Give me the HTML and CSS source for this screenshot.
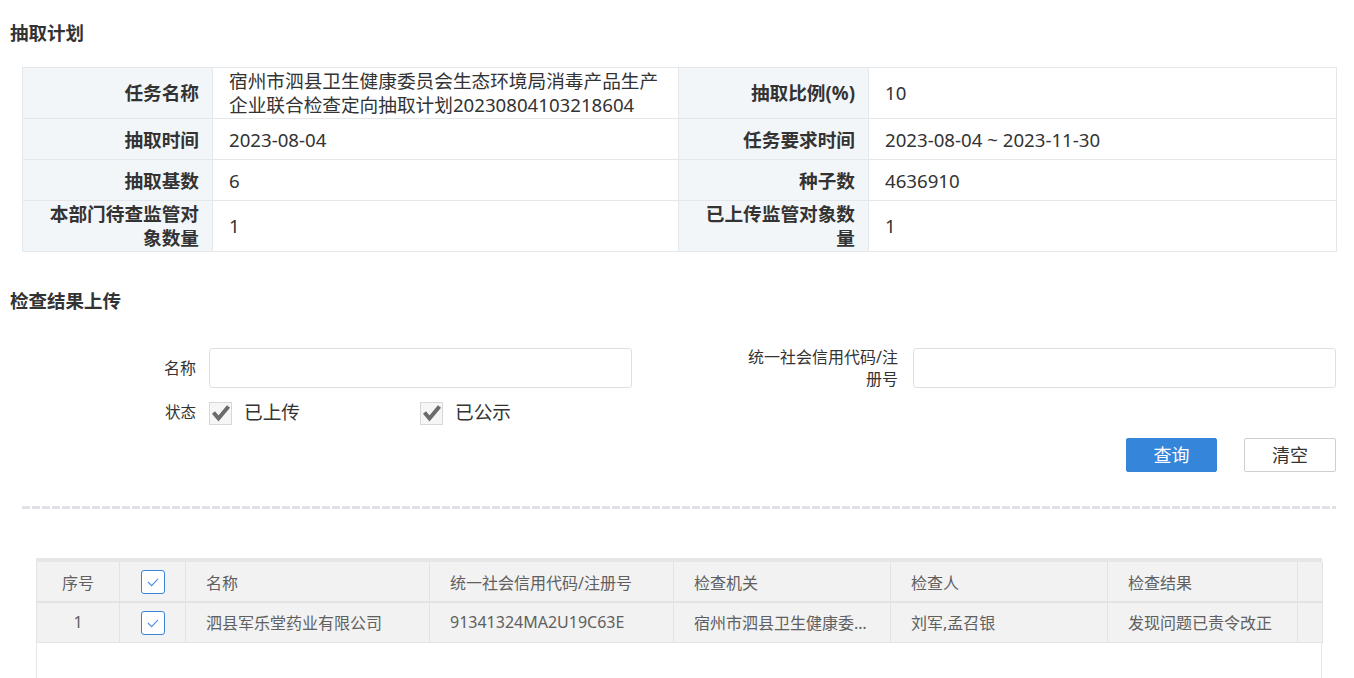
FILE: index.html
```html
<!DOCTYPE html>
<html lang="zh-CN">
<head>
<meta charset="utf-8">
<title>抽取计划</title>
<link rel="stylesheet" href="styles.css">
</head>
<body>
<div class="page">
  <h2 class="sec-title first">抽取计划</h2>
  <table class="info">
    <colgroup><col class="c-l"><col class="c-v1"><col class="c-l"><col class="c-v2"></colgroup>
    <tr class="tall">
      <th>任务名称</th>
      <td>宿州市泗县卫生健康委员会生态环境局消毒产品生产企业联合检查定向抽取计划20230804103218604</td>
      <th>抽取比例(%)</th>
      <td>10</td>
    </tr>
    <tr>
      <th>抽取时间</th>
      <td>2023-08-04</td>
      <th>任务要求时间</th>
      <td>2023-08-04 ~ 2023-11-30</td>
    </tr>
    <tr>
      <th>抽取基数</th>
      <td>6</td>
      <th>种子数</th>
      <td>4636910</td>
    </tr>
    <tr class="tall">
      <th>本部门待查监管对象数量</th>
      <td>1</td>
      <th>已上传监管对象数量</th>
      <td>1</td>
    </tr>
  </table>

  <h2 class="sec-title second">检查结果上传</h2>
  <form class="search">
    <div class="f-label">名称</div>
    <input class="f-input" type="text">
    <div class="f-label wide"><span>统一社会信用代码/注册号</span></div>
    <input class="f-input" type="text">

    <div class="f-label small">状态</div>
    <div class="checks">
      <label class="chk"><span class="box"><svg viewBox="0 0 22 22" width="22" height="22"><polyline points="3.5,10.5 8.5,16.5 18.5,4.5" /></svg></span>已上传</label>
      <label class="chk"><span class="box"><svg viewBox="0 0 22 22" width="22" height="22"><polyline points="3.5,10.5 8.5,16.5 18.5,4.5" /></svg></span>已公示</label>
    </div>
  </form>
  <div class="btns">
    <button type="button" class="btn primary">查询</button>
    <button type="button" class="btn">清空</button>
  </div>
  <div class="dash"></div>

  <div class="grid-wrap">
    <table class="grid">
      <colgroup>
        <col class="g1"><col class="g2"><col class="g3"><col class="g4"><col class="g5"><col class="g6"><col class="g7"><col class="g8">
      </colgroup>
      <thead>
        <tr>
          <th class="center">序号</th>
          <th class="center"><span class="tick"><svg viewBox="0 0 24 24" width="22" height="22"><polyline points="6.5,12 10.5,16 17.5,8.5"/></svg></span></th>
          <th>名称</th>
          <th>统一社会信用代码/注册号</th>
          <th>检查机关</th>
          <th>检查人</th>
          <th>检查结果</th>
          <th></th>
        </tr>
      </thead>
      <tbody>
        <tr>
          <td class="center">1</td>
          <td class="center"><span class="tick"><svg viewBox="0 0 24 24" width="22" height="22"><polyline points="6.5,12 10.5,16 17.5,8.5"/></svg></span></td>
          <td>泗县军乐堂药业有限公司</td>
          <td>91341324MA2U19C63E</td>
          <td class="ellip">宿州市泗县卫生健康委员会</td>
          <td>刘军,孟召银</td>
          <td>发现问题已责令改正</td>
          <td></td>
        </tr>
      </tbody>
    </table>
    <div class="grid-empty"></div>
  </div>
</div>
</body>
</html>
```

FILE: styles.css
```css
html, body {
  margin: 0;
  padding: 0;
  background: #fff;
  overflow: hidden;
}
body {
  font-family: "Noto Sans", "Noto Sans CJK SC", sans-serif;
  color: #333;
}
.page {
  padding: 0 18px 0 10px;
}
.sec-title {
  margin: 0;
  font-size: 18.5px;
  line-height: 24px;
  font-weight: bold;
  color: #333;
}
.sec-title.first { padding-top: 21px; }
.sec-title.second { margin-top: 37px; }

/* info table */
.info {
  margin: 22px 0 0 12px;
  width: 1314px;
  border-collapse: collapse;
  table-layout: fixed;
  font-size: 18.67px;
}
.info .c-l { width: 190px; }
.info .c-v1 { width: 466px; }
.info .c-v2 { width: 468px; }
.info th, .info td {
  border: 1px solid #e5e8eb;
  height: 41px;
  line-height: 24px;
  padding: 1px 16px 0 16px;
  box-sizing: border-box;
  vertical-align: middle;
}
.info tr.tall th, .info tr.tall td { height: 51px; padding-top: 1px; padding-bottom: 1px; }
.info th {
  background: #f3f6f9;
  text-align: right;
  font-weight: bold;
  padding-left: 14px;
  padding-right: 13px;
}
.info td {
  font-weight: normal;
  color: #333;
}

/* search form */
.search {
  margin: 35px 0 0 12px;
  width: 1314px;
  display: grid;
  grid-template-columns: 187px 423px 281px 423px;
  grid-template-rows: 40px 24px;
  row-gap: 12px;
  align-items: center;
}
.f-label {
  font-size: 16px;
  line-height: 22px;
  color: #333;
  text-align: right;
  padding-right: 13px;
}
.f-label.wide {
  padding-right: 15px;
  display: flex;
  justify-content: flex-end;
}
.f-label.wide span {
  display: block;
  width: 152px;
  text-align: right;
}
.f-label.small { font-size: 15.5px; }
.f-input {
  box-sizing: border-box;
  height: 40px;
  width: 423px;
  border: 1px solid #dcdfe6;
  border-radius: 3px;
  background: #fff;
  margin: 0;
  padding: 0 10px;
  font: inherit;
}
.checks {
  grid-column: 2 / 5;
  display: flex;
  align-items: center;
}
.chk {
  width: 211px;
  display: flex;
  align-items: center;
  font-size: 18.67px;
  color: #333;
  line-height: 24px;
}
.box {
  width: 23px;
  height: 23px;
  box-sizing: border-box;
  border: 1px solid #d8d8d8;
  background: #f6f6f6;
  margin-right: 12px;
  display: flex;
  align-items: center;
  justify-content: center;
  position: relative;
  top: 1px;
}
.box svg {
  display: block;
  flex: none;
}
.box polyline {
  fill: none;
  stroke: #6b6b6b;
  stroke-width: 4;
  stroke-linecap: butt;
  stroke-linejoin: miter;
}

/* buttons */
.btns {
  margin: 14px 0 0 12px;
  width: 1314px;
  display: flex;
  justify-content: flex-end;
  gap: 27px;
}
.btn {
  box-sizing: border-box;
  width: 92px;
  height: 34px;
  border: 1px solid #cfcfcf;
  border-radius: 2px;
  background: #fff;
  color: #333;
  font-family: "Noto Sans", "Noto Sans CJK SC", sans-serif;
  font-size: 18px;
  padding: 0;
  line-height: 30px;
}
.btn.primary {
  width: 91px;
  background: #3585db;
  border-color: #3585db;
  color: #fff;
}

.dash {
  margin: 34px 0 0 12px;
  width: 1314px;
  height: 3px;
  background: repeating-linear-gradient(to right, #dfe1e7 0 8px, transparent 8px 10px);
}

/* data grid */
.grid-wrap {
  margin: 49px 0 0 26px;
  width: 1286px;
  border-top: 4px solid #e6e6e6;
}
.grid {
  width: 1286px;
  border-collapse: collapse;
  table-layout: fixed;
  font-size: 16px;
  color: #606060;
}
.g1 { width: 83px; }
.g2 { width: 66px; }
.g3 { width: 244px; }
.g4 { width: 244px; }
.g5 { width: 217px; }
.g6 { width: 217px; }
.g7 { width: 190px; }
.g8 { width: 25px; }
.grid th, .grid td {
  background: #f2f2f2;
  border-left: 1px solid #e3e3e3;
  border-right: 1px solid #e3e3e3;
  height: 40px;
  box-sizing: border-box;
  padding: 0 8px 0 20px;
  text-align: left;
  font-weight: normal;
  vertical-align: middle;
  white-space: nowrap;
  overflow: hidden;
}
.grid thead th {
  border-bottom: 2px solid #e3e3e3;
}
.grid tbody td {
  border-bottom: 1px solid #e3e3e3;
}
.grid .center {
  text-align: center;
  padding: 0;
}
.grid .ellip { text-overflow: ellipsis; }
.tick {
  display: inline-flex;
  width: 24px;
  height: 24px;
  box-sizing: border-box;
  border: 1px solid #3c84d9;
  border-radius: 3px;
  background: #fff;
  align-items: center;
  justify-content: center;
  vertical-align: middle;
}
.tick svg { display: block; }
.tick polyline {
  fill: none;
  stroke: #4a8de0;
  stroke-width: 1.2;
}
.grid-empty {
  height: 40px;
  border-left: 1px solid #e6e6e6;
  border-right: 1px solid #e6e6e6;
}
```
